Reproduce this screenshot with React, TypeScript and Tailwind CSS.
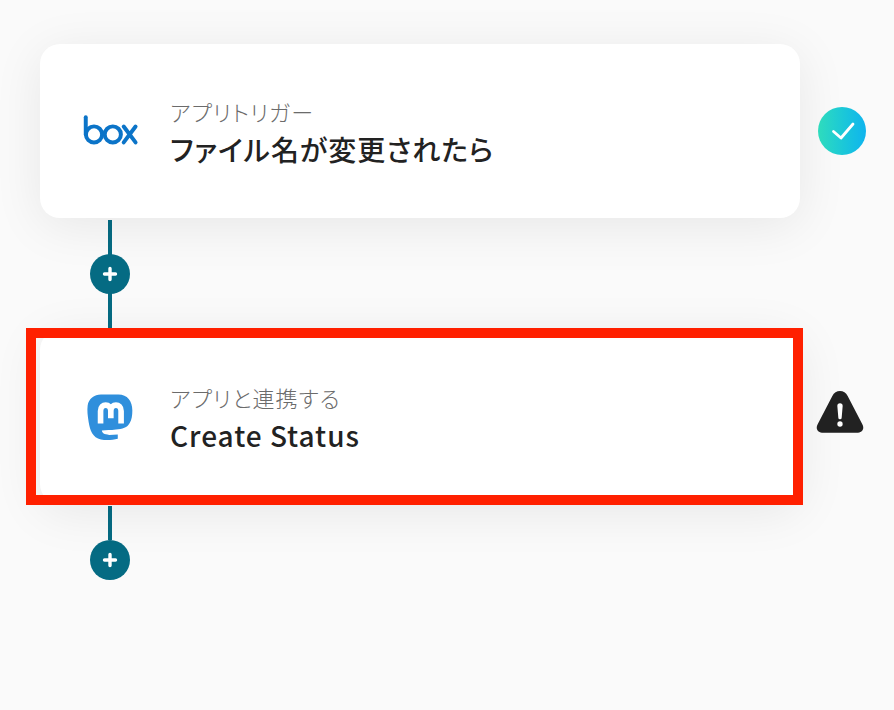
const font = { fontFamily: '"Noto Sans CJK JP", "Noto Sans", sans-serif' };

function PlusButton() {
  return (
    <div className="flex h-10 w-10 items-center justify-center rounded-full bg-[#056b83]">
      <svg width="18" height="18" viewBox="0 0 18 18">
        <path d="M9 3.5v11M3.5 9h11" stroke="#fff" strokeWidth="3.4" strokeLinecap="round" />
      </svg>
    </div>
  );
}

function BoxLogo() {
  return (
    <svg className="mb-[3px]" width="57" height="32" viewBox="65 70 170 97" fill="none" stroke="#0b74c8" strokeWidth="12" strokeLinecap="round">
      <path d="M75 80v52" />
      <circle cx="100" cy="132" r="24.500" />
      <circle cx="157" cy="132" r="24.500" />
      <path d="M190 108l36 48M226 108l-36 48" />
    </svg>
  );
}

function MastodonLogo() {
  return (
    <svg width="48" height="50" viewBox="80 35 145 150">
      <path
        d="M125 42H178C205 42 220 62 220 90C220 105 218 118 212 128C205 142 190 146 170 148C155 150 140 150 128 151C128 158 135 163 150 164L176 163V176C160 180 140 181 125 178C100 172 92 150 88 125C85 105 83 90 85 75C88 55 105 42 125 42Z"
        fill="#2f8fdc"
      />
      <path
        d="M124 130V92C124 68 155 68 155 92V114M155 92C155 68 186 68 186 92V130"
        fill="none"
        stroke="#fff"
        strokeWidth="17"
      />
    </svg>
  );
}

function Card({
  icon,
  label,
  title,
}: {
  icon: React.ReactNode;
  label: string;
  title: string;
}) {
  return (
    <div className="flex h-[174px] w-[760px] items-center rounded-[20px] bg-white pl-[40px] shadow-[0_8px_50px_rgba(0,0,0,0.08)]">
      <div className="flex w-[60px] justify-center">{icon}</div>
      <div className="ml-[30px] pt-[4px] [font-feature-settings:'palt']">
        <p className="text-[22px] leading-[26px] font-light tracking-[0.05em] text-[#6b6b6b]">{label}</p>
        <p className="mt-[6px] text-[28px] leading-[38px] font-medium tracking-[0.035em] text-[#222222]">{title}</p>
      </div>
    </div>
  );
}

export default function App() {
  return (
    <div style={font} className="h-[710px] w-[894px] overflow-hidden bg-[#fafafa] pt-[44px] pl-[40px]">
      <div className="flex items-center">
        <Card icon={<BoxLogo />} label="アプリトリガー" title="ファイル名が変更されたら" />
        <div className="ml-[18px] flex h-12 w-12 items-center justify-center rounded-full bg-gradient-to-r from-[#2fdcbc] to-[#10b4ee]">
          <svg width="48" height="48" viewBox="0 0 48 48" fill="none">
            <path d="M15.500 24.500l7.500 6.500L35 17" stroke="#fff" strokeWidth="2.800" strokeLinecap="round" strokeLinejoin="round" />
          </svg>
        </div>
      </div>

      <div className="mt-[2px] mb-[2px] ml-[68px] flex h-[108px] w-1 items-center justify-center bg-[#056b83]">
        <div className="shrink-0">
          <PlusButton />
        </div>
      </div>

      <div className="flex items-center">
        <div className="relative">
          <Card icon={<MastodonLogo />} label="アプリと連携する" title="Create Status" />
          <div className="absolute top-[-2px] right-[-3px] bottom-[-1px] left-[-14px] border-[10px] border-[#ff2000]" />
        </div>
        <svg className="mb-[10px] ml-[16px]" width="48" height="44" viewBox="48 32 144 132">
          <path
            d="M120 35C130 35 138 40 143 50L187 135C195 150 185 160 170 160H70C55 160 45 150 53 135L97 50C102 40 110 35 120 35Z"
            fill="#222222"
          />
          <path d="M112 80a8 8 0 0 1 16 0L125 115a5 5 0 0 1-10 0Z" fill="#fff" />
          <circle cx="120" cy="134" r="8" fill="#fff" />
        </svg>
      </div>

      <div className="mt-[2px] ml-[68px] h-[34px] w-1 bg-[#056b83]" />
      <div className="ml-[50px]">
        <PlusButton />
      </div>
    </div>
  );
}
